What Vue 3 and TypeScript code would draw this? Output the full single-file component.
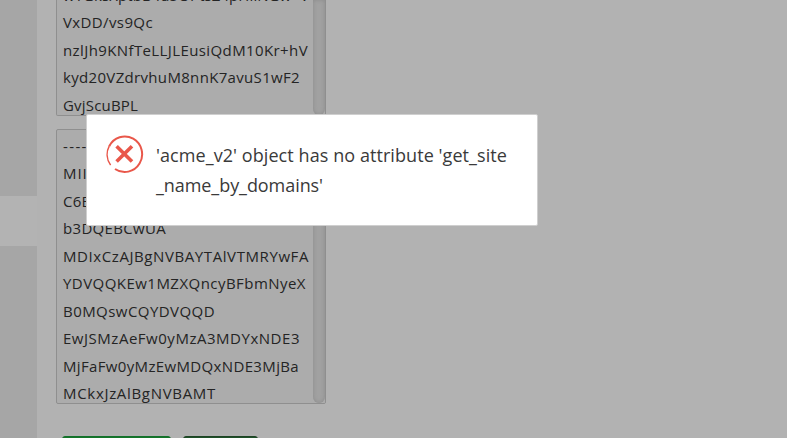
<script setup lang="ts">
import { onMounted, ref } from 'vue'

interface Line { text: string; width: number }

const keyLines: Line[] = [
  { text: 'wTGksXptbB4u5OPtsZ4pHiiNGw+V', width: 246 },
  { text: 'VxDD/vs9Qc', width: 90 },
  { text: 'nzlJh9KNfTeLLJLEusiQdM10Kr+hV', width: 245 },
  { text: 'kyd20VZdrvhuM8nnK7avuS1wF2', width: 237 },
  { text: 'GvjScuBPL', width: 75 },
]
const certLines: Line[] = [
  { text: '-----', width: 31 },
  { text: 'MIIC', width: 35 },
  { text: 'C6BA', width: 38 },
  { text: 'b3DQEBCwUA', width: 103 },
  { text: 'MDIxCzAJBgNVBAYTAlVTMRYwFA', width: 246 },
  { text: 'YDVQQKEw1MZXQncyBFbmNyeX', width: 243 },
  { text: 'B0MQswCQYDVQQD', width: 152 },
  { text: 'EwJSMzAeFw0yMzA3MDYxNDE3', width: 237 },
  { text: 'MjFaFw0yMzEwMDQxNDE3MjBa', width: 236 },
  { text: 'MCkxJzAlBgNVBAMT', width: 153 },
]
const message: Line[] = [
  { text: "'acme_v2' object has no attribute 'get_site", width: 351 },
  { text: "_name_by_domains'", width: 167 },
]

const root = ref<HTMLElement | null>(null)

// Spread each line's letters so that it fills its measured width.
onMounted(() => {
  root.value?.querySelectorAll<HTMLElement>('[data-width]').forEach((el) => {
    const target = Number(el.dataset.width)
    const count = el.textContent?.length ?? 1
    const gap = (target - el.getBoundingClientRect().width) / count
    el.style.letterSpacing = `${gap}px`
  })
})
</script>

<template>
  <div ref="root" class="page">
    <aside class="sidebar"><div class="current"></div></aside>
    <main class="content">
      <div class="area key">
        <div class="lines">
          <div v-for="l in keyLines" :key="l.text" class="line"><span :data-width="l.width">{{ l.text }}</span></div>
        </div>
        <div class="track"><div class="thumb"></div></div>
      </div>
      <div class="area cert">
        <div class="lines">
          <div v-for="l in certLines" :key="l.text" class="line"><span :data-width="l.width">{{ l.text }}</span></div>
        </div>
        <div class="track"><div class="thumb"></div></div>
      </div>
      <div class="buttons"><div class="button save"></div><div class="button close"></div></div>
    </main>
    <div class="dialog" role="alertdialog">
      <svg class="icon" width="38" height="40" viewBox="0 0 38 40" fill="none" stroke="#e9574a">
        <path d="M3.2 11.2A17.4 17.8 0 1 1 9 34" stroke-width="2" />
        <path d="M3.2 11.2A17.4 17.8 0 0 0 4.6 30.1" stroke-width="1.5" />
        <path d="M10.6 11.2 26 26.6M26 11.2 10.6 26.6" stroke-width="3.6" />
      </svg>
      <div class="message">
        <div v-for="l in message" :key="l.text" class="message-line"><span :data-width="l.width">{{ l.text }}</span></div>
      </div>
    </div>
  </div>
</template>

<style>
body { overflow: hidden; }
</style>

<style scoped>
.page {
  display: flex;
  width: 787px;
  height: 438px;
  overflow: hidden;
  background: #b2b2b2;
  color: #242424;
  font-family: "Open Sans", "Noto Sans", sans-serif;
}
.sidebar { width: 37px; flex: none; background: #a6a6a6; padding-top: 196px; box-sizing: border-box; }
.current { height: 50px; background: #b3b3b3; }
.content { display: flex; flex-direction: column; padding-left: 19px; }
.area {
  display: flex;
  box-sizing: border-box;
  width: 270px;
  flex: none;
  overflow: hidden;
  background: #acacac;
  border: 1px solid #8f8f8f;
  border-radius: 2px;
}
.key { height: 116px; border-top: 0; border-radius: 0 0 2px 2px; align-items: flex-end; }
.cert { height: 275px; margin-top: 13px; }
.lines { width: 256px; padding-left: 6px; box-sizing: border-box; flex: none; }
.key .lines { margin-bottom: -4px; }
.cert .lines { padding-top: 2.5px; }
.line { height: 27.5px; line-height: 27.5px; font-size: 15px; white-space: nowrap; }
.track { align-self: stretch; width: 12px; flex: none; background: #acacac; }
.thumb {
  height: 100%;
  box-sizing: border-box;
  background: #a1a1a1;
  border-radius: 0 0 6px 6px;
  box-shadow: inset 0 0 4px #8c8c8c;
}
.buttons { display: flex; gap: 12px; margin: 32px 0 0 6px; }
.button { height: 30px; border-radius: 3px; box-sizing: border-box; }
.save { width: 109px; background: #16752b; border: 1px solid #12702a; }
.close { width: 75px; background: #20502a; border: 1px solid #1d4324; }
.dialog {
  position: absolute;
  left: 86px;
  top: 114px;
  display: flex;
  box-sizing: border-box;
  width: 452px;
  height: 112px;
  padding: 20px 0 0 19px;
  background: #fff;
  border: 1px solid #cfcfcf;
  border-radius: 2px;
}
.icon { flex: none; }
.message { padding: 5px 0 0 12px; color: #3a3a3a; font-size: 18px; }
.message-line { height: 30px; line-height: 30px; white-space: nowrap; }
</style>
